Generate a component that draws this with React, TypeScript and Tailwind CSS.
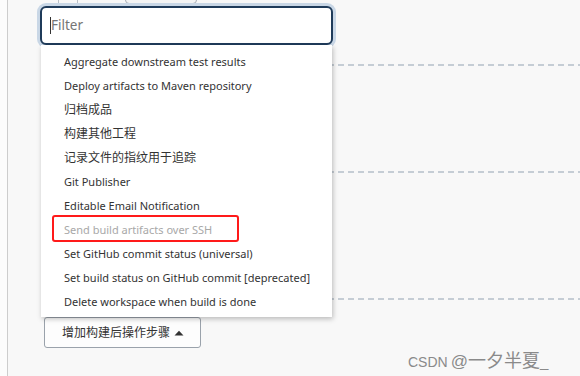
import React from "react";

const items = [
  "Aggregate downstream test results",
  "Deploy artifacts to Maven repository",
  "归档成品",
  "构建其他工程",
  "记录文件的指纹用于追踪",
  "Git Publisher",
  "Editable Email Notification",
  "Send build artifacts over SSH",
  "Set GitHub commit status (universal)",
  "Set build status on GitHub commit [deprecated]",
  "Delete workspace when build is done",
];

const isCjk = (s: string) => /[\u4e00-\u9fff]/.test(s);

function Dashed() {
  return (
    <div className="ml-[40px] h-[2px] bg-[repeating-linear-gradient(to_right,#c5cdd5_0_6px,transparent_6px_10px)]" />
  );
}

export default function App() {
  return (
    <div
      className="relative w-[580px] h-[376px] overflow-hidden bg-[#f8f8f8] flex text-[#333]"
      style={{ fontFamily: '"Noto Sans", "Noto Sans CJK SC", sans-serif' }}
    >
      <div className="w-[8px] shrink-0 bg-[#fcfcfc] border-r border-[#cdcdcd]" />
      <div className="flex-1 flex flex-col">
        <div className="h-[5px] flex items-start">
          <div className="ml-[50px] w-[20px] h-[5px] border-x border-[#b9c0c7]" />
          <div className="ml-[47px] w-[72px] h-[5px] -mt-[1px] border border-[#a6adb5] rounded-b-[4px] bg-[#f4f4f4]" />
        </div>
        <div className="h-[59px]" />
        <Dashed />
        <div className="h-[105px]" />
        <Dashed />
        <div className="h-[125px]" />
        <Dashed />
        <div className="h-[17px]" />
        <div className="ml-[36px] w-[157px] h-[31px] border-[1.5px] border-[#9aa2ab] rounded-[3px] bg-[#fdfdfd] flex items-center pl-[17px] gap-[4px] text-[12px] text-[#333]">
          <span className="whitespace-nowrap">增加构建后操作步骤</span>
          <svg width="10" height="6" viewBox="0 0 10 6">
            <path d="M0.5 5.5 L5 0.8 L9.5 5.5 Z" fill="#333" />
          </svg>
        </div>
      </div>

      <div className="absolute left-[37px] top-[3px] w-[299px]">
        <div className="rounded-[9px] bg-[#c9d7e6] p-[3px]">
          <div className="h-[39px] rounded-[6px] border-2 border-[#1f3b5a] bg-white flex items-center pl-[8px]">
            <span className="w-[1px] h-[17px] bg-[#333]" />
            <span className="text-[13.5px] text-[#757575]">Filter</span>
          </div>
        </div>
        <div className="ml-[4px] w-[291px] -mt-[3px] bg-white shadow-[1px_2px_5px_rgba(0,0,0,0.25)] pt-[5px] pb-[3px] flex flex-col">
          {items.map((t, i) => (
            <div
              key={i}
              className={
                "relative h-[24px] flex items-center pl-[23px] whitespace-nowrap " +
                (isCjk(t) ? "text-[12px]" : "text-[11px]")
              }
            >
              {i === 7 && (
                <div className="absolute left-[11px] -top-[3px] w-[187px] h-[27px] border-2 border-[#ff1a1a] rounded-[3px]" />
              )}
              <span className={i === 7 ? "text-[#a8a8a8]" : "text-[#333]"}>{t}</span>
            </div>
          ))}
        </div>
      </div>

      <div
        className="absolute left-[408px] top-[346px] flex items-baseline text-[#8a8a8a] whitespace-nowrap"
        style={{ fontFamily: '"Liberation Sans", "Noto Sans CJK SC", sans-serif' }}
      >
        <span className="text-[14px]">CSDN</span>
        <span className="text-[17px] ml-[3px]">@</span>
        <span className="text-[18px]" style={{ fontFamily: '"Noto Sans CJK SC", sans-serif' }}>一夕半夏</span>
        <span className="text-[15px]">_</span>
      </div>
    </div>
  );
}
